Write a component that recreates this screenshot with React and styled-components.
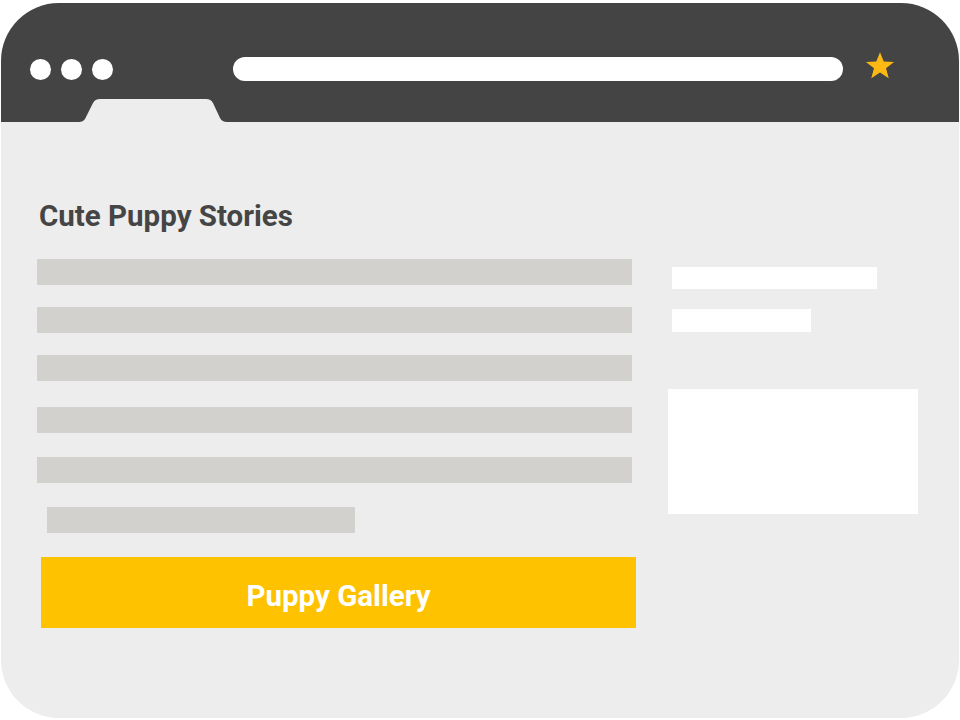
import styled, { createGlobalStyle } from 'styled-components';

const GlobalStyle = createGlobalStyle`
  body {
    margin: 0;
    background: #fff;
    font-family: Roboto, "Liberation Sans", sans-serif;
  }
`;

const Window = styled.div`
  margin: 3px 0 0 1px;
  width: 958px;
  height: 715px;
  border-radius: 58px;
  overflow: hidden;
  background: #ededed;
  display: flex;
  flex-direction: column;
`;

const Header = styled.div`
  background: #444444;
  display: flex;
  flex-direction: column;
`;

const TopRow = styled.div`
  display: flex;
  align-items: center;
  padding: 54px 0 0 29px;
  height: 24px;
`;

const Dots = styled.div`
  display: flex;
  gap: 10px;
`;

const Dot = styled.span`
  width: 21px;
  height: 21px;
  border-radius: 50%;
  background: #fff;
`;

const UrlBar = styled.div`
  margin-left: 120px;
  width: 610px;
  height: 24px;
  border-radius: 12px;
  background: #fff;
`;

const Star = styled.svg`
  margin-left: 22px;
  margin-top: -8px;
  width: 30px;
  height: 29px;
`;

const TabRow = styled.div`
  margin-top: 18px;
  height: 23px;
  display: flex;
`;

const Tab = styled.svg`
  margin-left: 78px;
  width: 148px;
  height: 23px;
  display: block;
`;

const Content = styled.div`
  padding: 77px 0 0 36px;
  display: flex;
  flex-direction: column;
`;

const Title = styled.h1`
  margin: 0 0 26px 2px;
  font-size: 29.5px;
  line-height: 34px;
  font-weight: 700;
  color: #454545;
`;

const Columns = styled.div`
  display: flex;
  gap: 31px;
`;

const Main = styled.div`
  width: 600px;
  display: flex;
  flex-direction: column;
`;

const Line = styled.div`
  height: 26px;
  width: ${(p) => p.$w || 595}px;
  margin-left: ${(p) => p.$indent || 0}px;
  margin-top: ${(p) => p.$top || 0}px;
  background: #d2d1cd;
`;

const Button = styled.div`
  margin: 24px 0 0 4px;
  padding-top: 6px;
  box-sizing: border-box;
  width: 595px;
  height: 71px;
  background: #ffc200;
  color: #fff;
  font-size: 29.5px;
  font-weight: 700;
  display: flex;
  align-items: center;
  justify-content: center;
`;

const Side = styled.div`
  padding-top: 8px;
  display: flex;
  flex-direction: column;
`;

const SideLine = styled.div`
  height: ${(p) => p.$h}px;
  width: ${(p) => p.$w}px;
  margin: ${(p) => p.$top || 0}px 0 0 4px;
  background: #fff;
`;

const SideBox = styled.div`
  margin-top: 57px;
  width: 250px;
  height: 125px;
  background: #fff;
`;

export default function App() {
  return (
    <>
      <GlobalStyle />
      <Window>
        <Header>
          <TopRow>
            <Dots>
              <Dot />
              <Dot />
              <Dot />
            </Dots>
            <UrlBar />
            <Star viewBox="0 0 24 23">
              <polygon
                points="12,0.8 15,8.3 23.2,8.6 16.8,13.7 19,21.6 12,17.1 5,21.6 7.2,13.7 0.8,8.6 9,8.3"
                fill="#fdb913"
              />
            </Star>
          </TopRow>
          <TabRow>
            <Tab viewBox="0 0 148 23">
              <path
                d="M0 23 Q4 23 6 20 L14 4 Q16 0 21 0 L127 0 Q132 0 134 4 L141 19 Q143 23 148 23 Z"
                fill="#ededed"
              />
            </Tab>
          </TabRow>
        </Header>
        <Content>
          <Title>Cute Puppy Stories</Title>
          <Columns>
            <Main>
              <Line />
              <Line $top={22} />
              <Line $top={22} />
              <Line $top={26} />
              <Line $top={24} />
              <Line $top={24} $w={308} $indent={10} />
              <Button>Puppy Gallery</Button>
            </Main>
            <Side>
              <SideLine $w={205} $h={22} />
              <SideLine $w={139} $h={23} $top={20} />
              <SideBox />
            </Side>
          </Columns>
        </Content>
      </Window>
    </>
  );
}
